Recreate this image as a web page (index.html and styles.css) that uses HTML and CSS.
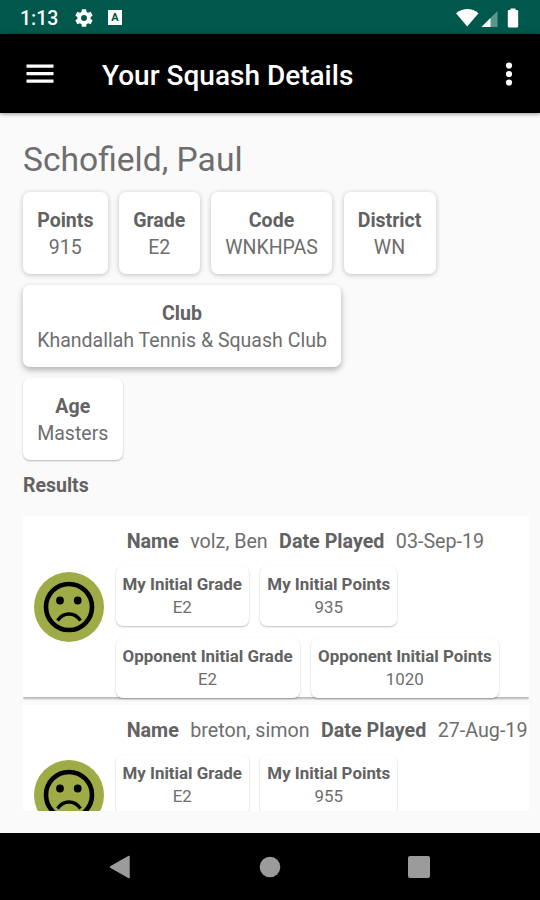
FILE: index.html
```
<!DOCTYPE html>
<html lang="en">

<head>
    <meta charset="UTF-8">
    <meta name="viewport" content="width=device-width, initial-scale=1.0">
    <title>Your Squash Details</title>
    <link rel="stylesheet" href="styles.css">
</head>

<body>
    <div class="screen">
        <div class="status-bar">
            <span class="time">1:13</span>
            <svg class="gear" width="22" height="22" viewBox="0 0 24 24">
                <path fill="#fff" d="M19.14 12.94c.04-.3.06-.61.06-.94s-.02-.64-.07-.94l2.03-1.58a.49.49 0 0 0 .12-.61l-1.92-3.32a.49.49 0 0 0-.59-.22l-2.39.96a7 7 0 0 0-1.62-.94l-.36-2.54a.48.48 0 0 0-.48-.41h-3.84a.48.48 0 0 0-.47.41l-.36 2.54c-.59.24-1.13.57-1.62.94l-2.39-.96a.48.48 0 0 0-.59.22L2.74 8.87a.48.48 0 0 0 .12.61l2.03 1.58c-.05.3-.09.63-.09.94s.02.64.07.94l-2.03 1.58a.49.49 0 0 0-.12.61l1.92 3.32c.12.22.37.29.59.22l2.39-.96c.5.38 1.03.7 1.62.94l.36 2.54c.05.24.24.41.48.41h3.84c.24 0 .44-.17.47-.41l.36-2.54c.59-.24 1.13-.56 1.62-.94l2.39.96c.22.08.47 0 .59-.22l1.92-3.32a.48.48 0 0 0-.12-.61zM12 15.2a3.2 3.2 0 1 1 0-6.4 3.2 3.2 0 0 1 0 6.4z" />
            </svg>
            <span class="badge">A</span>
            <svg class="signals" width="66" height="22" viewBox="0 0 66 22">
                <path fill="#fff" d="M1 6.2Q12.500-2 23.500 6.200L12.200 19.500z" />
                <path fill="#5d968f" d="M42.500 4V20H26.500z" />
                <path fill="#fff" d="M35.500 11V20H26.500z" />
                <path fill="#fff" d="M55.500 1.500h5v1.500h1.500q1.200 0 1.200 1.200v15.100q0 1.200-1.200 1.200h-8q-1.200 0-1.200-1.200v-15.100q0-1.200 1.200-1.200h1.500z" />
            </svg>
        </div>

        <div class="app-bar">
            <svg class="menu-icon" width="28" height="20" viewBox="0 0 28 20">
                <path fill="#fff" d="M.5 .5h27v3.200h-27zM.5 8h27v3.200h-27zM.5 15.500h27v3.200h-27z" />
            </svg>
            <h1>Your Squash Details</h1>
            <svg class="more-icon" width="8" height="24" viewBox="0 0 8 24">
                <circle cx="4" cy="3.500" r="3.100" fill="#fff" />
                <circle cx="4" cy="12" r="3.100" fill="#fff" />
                <circle cx="4" cy="20.500" r="3.100" fill="#fff" />
            </svg>
        </div>

        <div class="content">
            <h2>Schofield, Paul</h2>

            <div class="details">
                <div class="card"><b>Points</b><span>915</span></div>
                <div class="card"><b>Grade</b><span>E2</span></div>
                <div class="card"><b>Code</b><span>WNKHPAS</span></div>
                <div class="card"><b>District</b><span>WN</span></div>
                <div class="card raised"><b>Club</b><span>Khandallah Tennis &amp; Squash Club</span></div>
                <div class="card flat"><b>Age</b><span>Masters</span></div>
            </div>

            <h3>Results</h3>

            <div class="results">
                <div class="result">
                    <svg class="face" width="70" height="70" viewBox="0 0 70 70">
                        <circle cx="35" cy="35" r="35" fill="#9fab46" />
                        <circle cx="35" cy="35" r="23" fill="none" stroke="#000" stroke-width="4.600" />
                        <circle cx="26" cy="28.500" r="3.900" />
                        <circle cx="43.700" cy="28.500" r="3.900" />
                        <path d="M23.500 48.500Q28 42 35 42T46.500 48.500" fill="none" stroke="#000" stroke-width="3.300" />
                    </svg>
                    <div class="result-info">
                        <div class="result-head">
                            <b>Name</b><span>volz, Ben</span><b>Date Played</b><span>03-Sep-19</span>
                        </div>
                        <div class="stats">
                            <div class="stat"><b>My Initial Grade</b><span>E2</span></div>
                            <div class="stat"><b>My Initial Points</b><span>935</span></div>
                            <div class="stat"><b>Opponent Initial Grade</b><span>E2</span></div>
                            <div class="stat"><b>Opponent Initial Points</b><span>1020</span></div>
                        </div>
                    </div>
                </div>

                <div class="result">
                    <svg class="face" width="70" height="70" viewBox="0 0 70 70">
                        <circle cx="35" cy="35" r="35" fill="#9fab46" />
                        <circle cx="35" cy="35" r="23" fill="none" stroke="#000" stroke-width="4.600" />
                        <circle cx="26" cy="28.500" r="3.900" />
                        <circle cx="43.700" cy="28.500" r="3.900" />
                        <path d="M23.500 48.500Q28 42 35 42T46.500 48.500" fill="none" stroke="#000" stroke-width="3.300" />
                    </svg>
                    <div class="result-info">
                        <div class="result-head">
                            <b>Name</b><span>breton, simon</span><b>Date Played</b><span>27-Aug-19</span>
                        </div>
                        <div class="stats">
                            <div class="stat"><b>My Initial Grade</b><span>E2</span></div>
                            <div class="stat"><b>My Initial Points</b><span>955</span></div>
                        </div>
                    </div>
                </div>
            </div>
        </div>

        <div class="nav-bar">
            <svg width="22" height="24" viewBox="0 0 22 24">
                <path d="M1.500 12L20 1.500v21z" fill="#9b9b9b" stroke="#9b9b9b" stroke-width="1.500" stroke-linejoin="round" />
            </svg>
            <svg width="22" height="22" viewBox="0 0 22 22">
                <circle cx="11" cy="11" r="10.300" fill="#9b9b9b" />
            </svg>
            <svg width="22" height="22" viewBox="0 0 22 22">
                <rect width="22" height="22" rx="2" fill="#9b9b9b" />
            </svg>
        </div>
    </div>
</body>

</html>
```
FILE: styles.css
```
* {
    margin: 0;
    padding: 0;
    box-sizing: border-box;
}

body {
    font-family: Roboto, sans-serif;
    background: #fafafa;
    color: #6e6e6e;
}

b,
h3 {
    font-weight: 700;
    color: #626262;
}

.screen {
    width: 540px;
    height: 900px;
    display: flex;
    flex-direction: column;
    overflow: hidden;
}

.status-bar {
    height: 34px;
    flex: none;
    display: flex;
    align-items: center;
    padding: 1px 19px 0 20px;
    background: #00574b;
    color: #fff;
}

.time {
    width: 53px;
    padding-top: 1px;
    font-size: 19.5px;
    font-weight: 500;
}

.badge {
    width: 14px;
    height: 15px;
    margin-left: 13px;
    background: #fff;
    color: #00574b;
    font-size: 11px;
    font-weight: 700;
    line-height: 15px;
    text-align: center;
}

.signals {
    margin-left: auto;
}

.app-bar {
    height: 79px;
    flex: none;
    display: flex;
    align-items: center;
    padding: 0 27px 0 26px;
    background: #000;
    color: #fff;
    box-shadow: 0 1px 4px rgba(0, 0, 0, 0.4);
}

.app-bar h1 {
    margin-left: 48px;
    padding-top: 4px;
    font-size: 28px;
    font-weight: 500;
}

.more-icon {
    margin-left: auto;
}

.content {
    height: 720px;
    flex: none;
    padding: 26px 11px 0 23px;
}

.content h2 {
    height: 53px;
    font-size: 33.6px;
    font-weight: 400;
    line-height: 41px;
    color: #6e6e6e;
}

.details {
    display: flex;
    flex-wrap: wrap;
    gap: 11px 11.4px;
    padding-right: 50px;
}

.card {
    height: 82px;
    display: flex;
    flex-direction: column;
    align-items: center;
    padding: 16px 14.2px;
    border-radius: 7px;
    background: #fff;
    font-size: 19.55px;
    line-height: 26.5px;
    box-shadow: 0 1px 5px rgba(0, 0, 0, 0.24);
}

.raised {
    margin-right: 60px;
    box-shadow: 0 3px 6px rgba(0, 0, 0, 0.3);
}

.flat {
    box-shadow: 0 1px 2px rgba(0, 0, 0, 0.28);
}

.content h3 {
    margin-top: 12px;
    font-size: 19.5px;
    line-height: 27px;
}

.results {
    height: 295px;
    margin-top: 17px;
    overflow: hidden;
}

.result {
    height: 181px;
    display: flex;
    align-items: center;
    margin-bottom: 7.5px;
    padding-left: 11px;
    background: #fff;
    box-shadow: 0 2px 2px rgba(0, 0, 0, 0.28);
}

.face {
    flex: none;
}

.result-info {
    height: 181px;
    margin-left: 11.5px;
}

.result-head {
    height: 50px;
    display: flex;
    gap: 11.4px;
    padding-left: 11.2px;
    font-size: 19.7px;
    line-height: 52px;
    white-space: nowrap;
}

.stats {
    display: flex;
    flex-wrap: wrap;
    gap: 11.5px;
}

.stat {
    height: 60px;
    display: flex;
    flex-direction: column;
    align-items: center;
    padding: 7px;
    border-radius: 7px;
    background: #fff;
    font-size: 16.9px;
    line-height: 23px;
    white-space: nowrap;
    box-shadow: 0 1px 2px rgba(0, 0, 0, 0.25);
}

.nav-bar {
    height: 67px;
    flex: none;
    display: flex;
    align-items: center;
    justify-content: space-between;
    padding: 0 110px 0 109px;
    background: #000;
}
```
